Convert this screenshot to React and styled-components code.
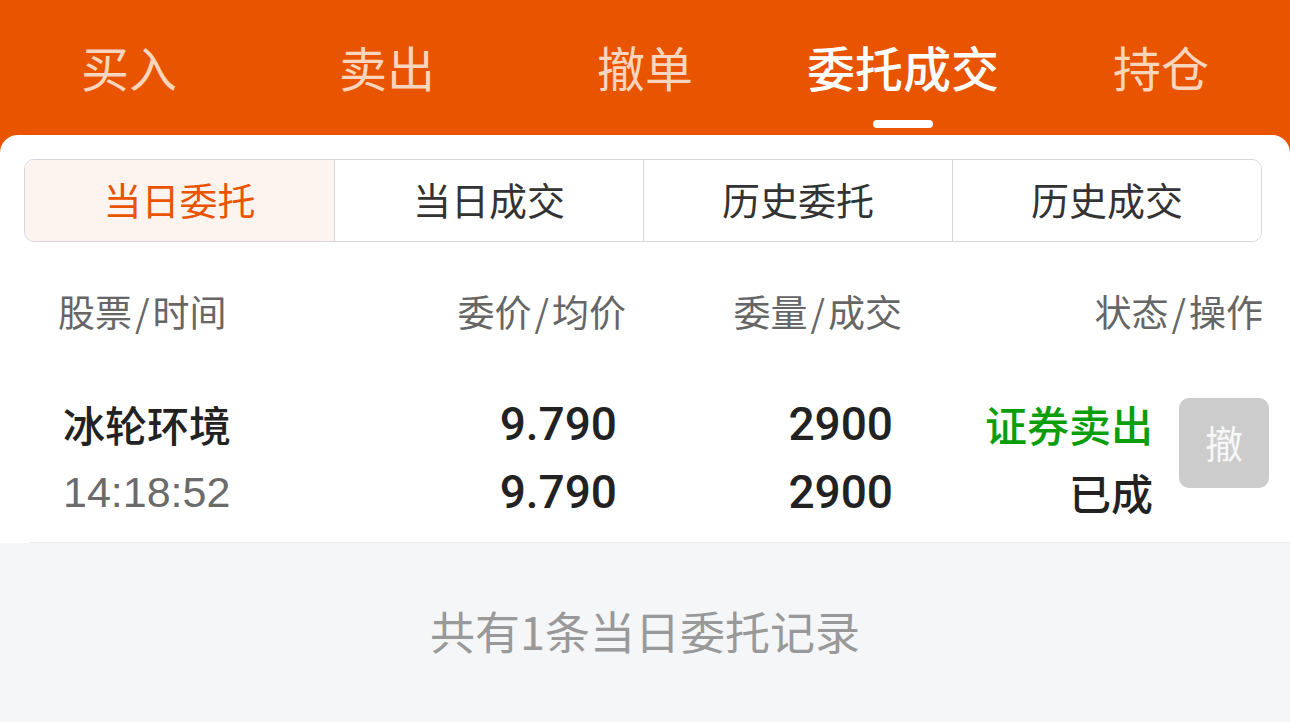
import React from "react";
import styled, { createGlobalStyle } from "styled-components";

const Global = createGlobalStyle`
  html, body { margin: 0; padding: 0; }
  body {
    font-family: "Liberation Sans", "Noto Sans CJK SC", sans-serif;
    background: #f5f6f8;
    -webkit-font-smoothing: antialiased;
  }
  * { box-sizing: border-box; }
`;

const Page = styled.div`
  width: 1290px;
  height: 722px;
  display: flex;
  flex-direction: column;
  background: #e85400;
  overflow: hidden;
`;

const TopTabs = styled.nav`
  display: grid;
  grid-template-columns: repeat(5, 1fr);
  height: 135px;
  flex-shrink: 0;
`;

const TopTab = styled.div`
  display: flex;
  flex-direction: column;
  align-items: center;
  padding-top: 40px;
  font-family: "Noto Sans CJK SC", sans-serif;
  font-size: 48px;
  line-height: 52px;
  color: ${(p) => (p.$active ? "#ffffff" : "rgba(255, 232, 218, 0.88)")};
  font-weight: ${(p) => (p.$active ? 500 : 400)};
`;

const Indicator = styled.span`
  display: block;
  width: 60px;
  height: 8px;
  margin-top: 28px;
  border-radius: 4px;
  background: ${(p) => (p.$active ? "#ffffff" : "transparent")};
`;

const Card = styled.main`
  flex: 1;
  display: flex;
  flex-direction: column;
  background: #ffffff;
  border-radius: 18px 18px 0 0;
  overflow: hidden;
`;

const Segments = styled.div`
  margin: 24px 28px 0 24px;
  height: 83px;
  display: grid;
  grid-template-columns: repeat(4, 1fr);
  border: 1px solid #d6d6dc;
  border-radius: 10px;
  overflow: hidden;
`;

const Segment = styled.div`
  display: flex;
  align-items: center;
  justify-content: center;
  font-family: "Noto Sans CJK SC", sans-serif;
  font-size: 38px;
  padding-bottom: 4px;
  color: ${(p) => (p.$active ? "#e85400" : "#333333")};
  background: ${(p) => (p.$active ? "#fdf4f0" : "#ffffff")};
  & + & {
    border-left: 1px solid #d6d6dc;
  }
`;

const HeadRow = styled.div`
  height: 144px;
  display: grid;
  grid-template-columns: 292px 276px 276px 361px;
  align-items: center;
  padding: 0 27px 6px 58px;
  font-family: "Noto Sans CJK SC", sans-serif;
  font-size: 37px;
  color: #666666;
`;

const Cell = styled.div`
  text-align: ${(p) => p.$align || "right"};
  white-space: nowrap;
`;

const Slash = styled.span`
  margin: 0 3px;
`;

const DataRow = styled.div`
  display: grid;
  grid-template-columns: 287px 267px 276px 260px 1fr;
  padding: 4px 21px 16px 63px;
  height: 156px;
`;

const Stack = styled.div`
  display: flex;
  flex-direction: column;
  align-items: ${(p) => (p.$left ? "flex-start" : "flex-end")};
`;

const Line = styled.div`
  height: 68px;
  line-height: 68px;
  white-space: nowrap;
  font-size: ${(p) => p.$size || 40}px;
  font-weight: ${(p) => p.$weight || 400};
  color: ${(p) => p.$color || "#222222"};
  font-family: ${(p) =>
    p.$cjk
      ? `"Noto Sans CJK SC", sans-serif`
      : p.$num
      ? `"Roboto", "Liberation Sans", sans-serif`
      : `"Liberation Sans", "Noto Sans CJK SC", sans-serif`};
`;

const CancelButton = styled.button`
  margin-top: 8px;
  width: 90px;
  height: 90px;
  border: none;
  border-radius: 10px;
  background: #cccccc;
  color: #f7f7f7;
  font-family: "Noto Sans CJK SC", sans-serif;
  font-size: 38px;
  padding: 0 0 4px;
  justify-self: end;
`;

const Divider = styled.div`
  height: 1px;
  margin-left: 30px;
  background: #ececee;
`;

const Footer = styled.footer`
  flex: 1;
  background: #f5f6f8;
  display: flex;
  align-items: center;
  justify-content: center;
  font-family: "Noto Sans CJK SC", sans-serif;
  font-size: 45px;
  color: #999999;
  padding-bottom: 4px;
`;

const tabs = ["买入", "卖出", "撤单", "委托成交", "持仓"];
const segs = ["当日委托", "当日成交", "历史委托", "历史成交"];
const heads = [
  ["股票", "时间"],
  ["委价", "均价"],
  ["委量", "成交"],
  ["状态", "操作"],
];

export default function App() {
  return (
    <>
      <Global />
      <Page>
        <TopTabs>
          {tabs.map((t, i) => (
            <TopTab key={t} $active={i === 3}>
              {t}
              <Indicator $active={i === 3} />
            </TopTab>
          ))}
        </TopTabs>
        <Card>
          <Segments>
            {segs.map((s, i) => (
              <Segment key={s} $active={i === 0}>
                {s}
              </Segment>
            ))}
          </Segments>
          <HeadRow>
            {heads.map(([a, b], i) => (
              <Cell key={a} $align={i === 0 ? "left" : "right"}>
                {a}
                <Slash>/</Slash>
                {b}
              </Cell>
            ))}
          </HeadRow>
          <DataRow>
            <Stack $left>
              <Line $cjk $weight={500} $size={42} $color="#222222">冰轮环境</Line>
              <Line $size={43} $color="#6b6b6b">14:18:52</Line>
            </Stack>
            <Stack>
              <Line $num $weight={500} $size={46}>9.790</Line>
              <Line $num $weight={500} $size={46}>9.790</Line>
            </Stack>
            <Stack>
              <Line $num $weight={500} $size={46}>2900</Line>
              <Line $num $weight={500} $size={46}>2900</Line>
            </Stack>
            <Stack>
              <Line $cjk $weight={500} $size={42} $color="#0a9e0a">证券卖出</Line>
              <Line $cjk $weight={500} $size={42} $color="#222222">已成</Line>
            </Stack>
            <CancelButton>撤</CancelButton>
          </DataRow>
          <Divider />
          <Footer>共有1条当日委托记录</Footer>
        </Card>
      </Page>
    </>
  );
}
